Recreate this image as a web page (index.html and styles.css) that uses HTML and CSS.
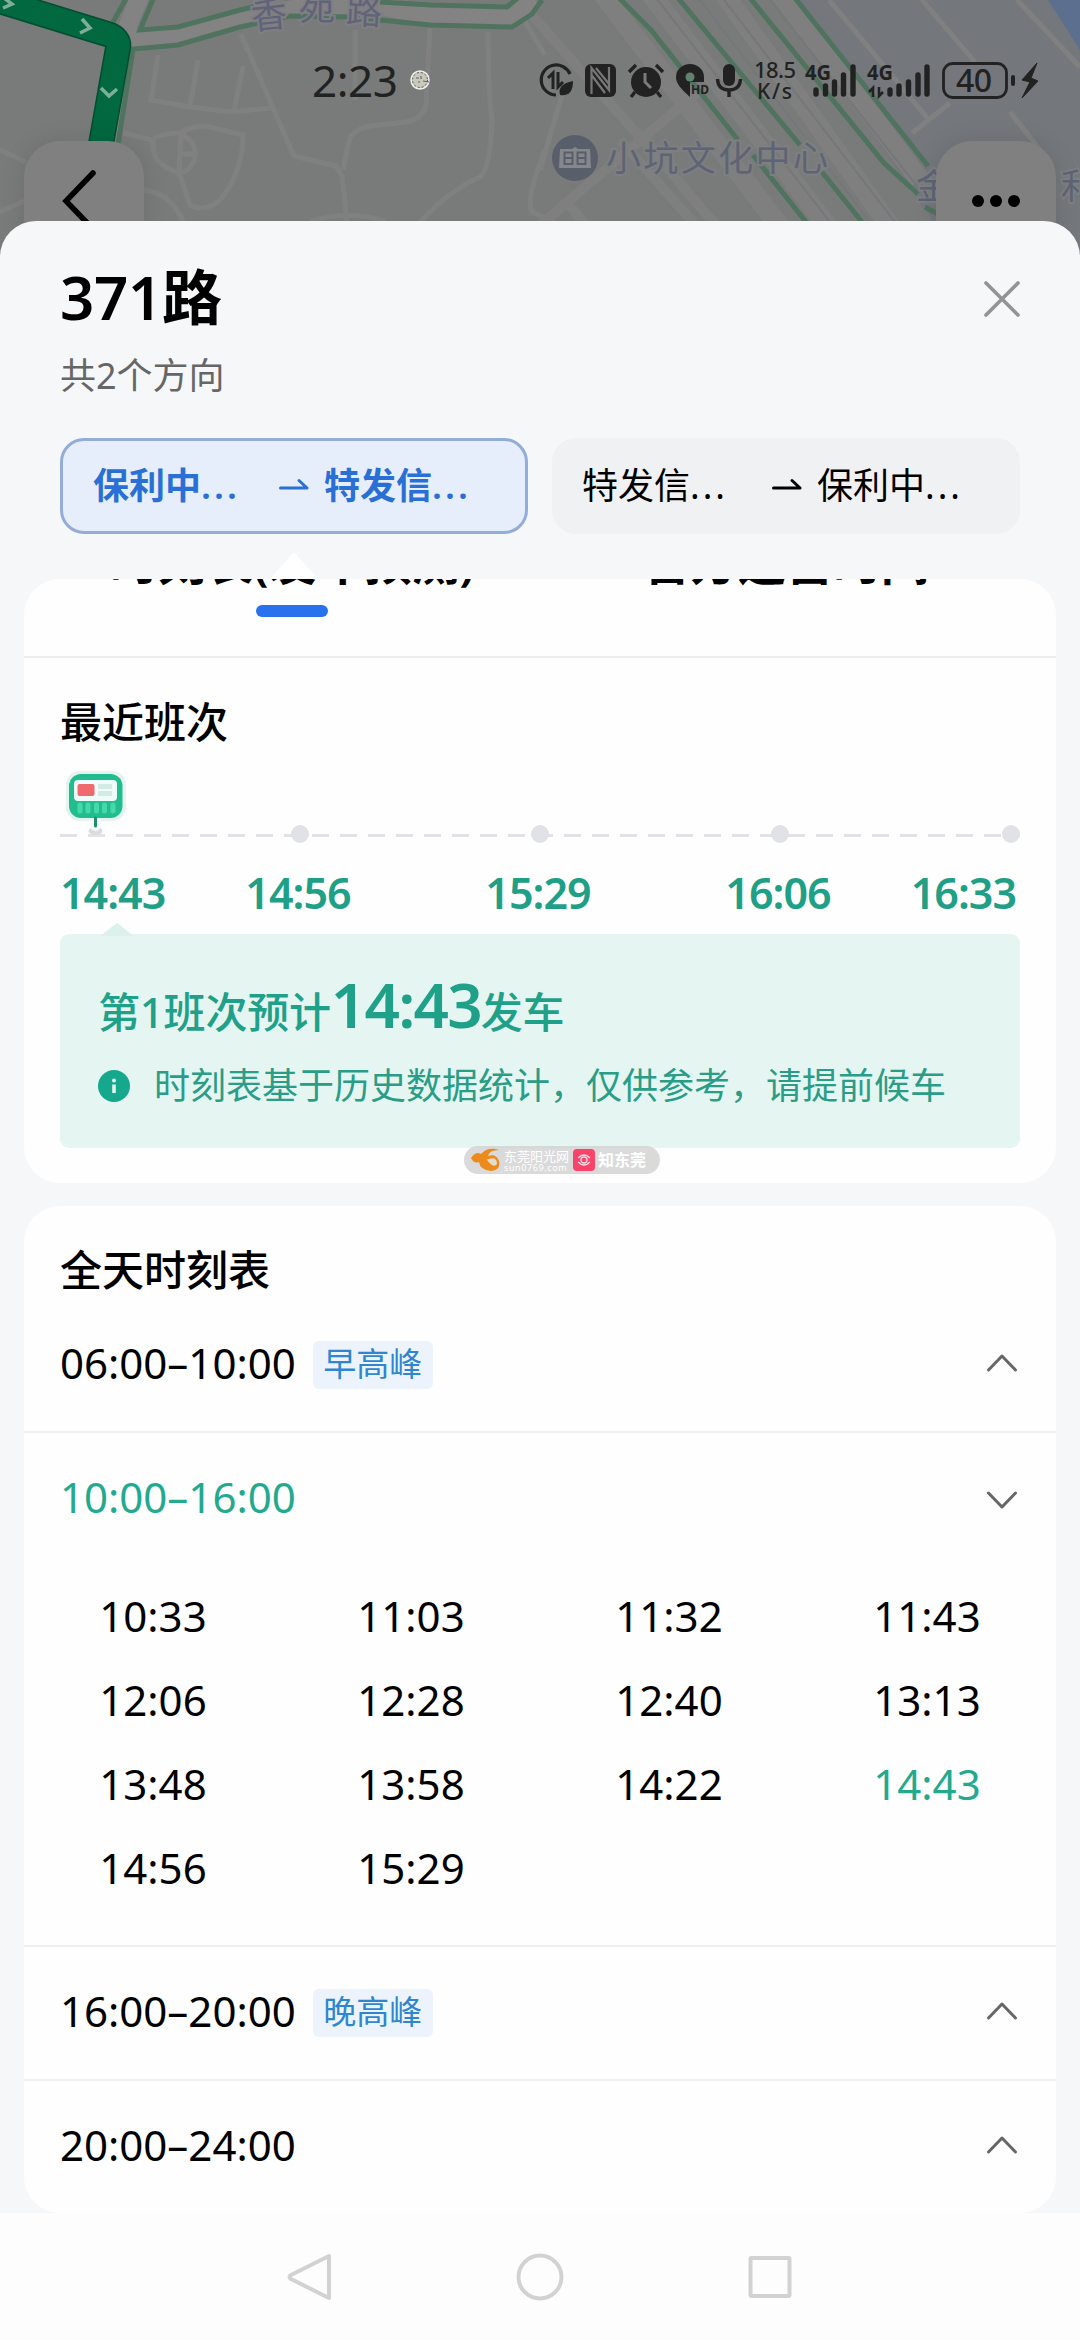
FILE: index.html
```html
<!DOCTYPE html>
<html lang="zh-CN">
<head>
<meta charset="UTF-8">
<title>371路</title>
<link rel="stylesheet" href="styles.css">
</head>
<body>
<div class="map">
	<svg class="map-canvas" width="1080" height="260" viewBox="0 0 1080 260">
		<rect width="1080" height="260" fill="#787b7a" />
		<path d="M780 0H1080V260H960z" fill="#74777c" />
		<path d="M1048 0H1080V50z" fill="#5c6f8e" />
		<!-- small streets -->
		<g fill="none" stroke="#808080" stroke-width="5">
			<path d="M241 34L273 108L294 156L336 166L342 176L347 221M158 55L151 100L190 107L232 112L272 108M198 60L190 107M243 66L234 112" />
			<path d="M123 133L152 140Q156 134 180 133Q190 126 205 126L243 135Q243 170 222 198Q205 214 190 205L179 173Q155 165 153 148V140M180 133Q200 145 194 160Q190 172 179 173L181 133M181 154H195" />
			<path d="M355 30V100M430 28L426 105Q422 120 405 122L370 126Q350 130 348 145L343 170M488 32Q488 90 492 120Q490 170 480 177Q450 190 420 222M524 20L545 55M0 150L26 162M0 212L26 200M143 190Q170 192 183 221M310 221Q350 210 385 221" />
			<path d="M829 0L929 120M950 103L912 133M922 0L975 62M1017 0L1080 67M1010 112L1040 150M562 95L540 170M545 150Q525 200 532 212L560 225" />
		</g>
		<g fill="none" stroke="#7f7f7f">
			<path d="M532 15L660 160L720 230M540 225L700 90M620 140L700 230M565 200L590 230" stroke-width="10" />
			<path d="M592 -20L790 240M640 -20L838 240M714 -20L900 240M770 -20L920 180" stroke-width="20" />
		</g>
		<g fill="none" stroke="#76777a" stroke-width="2">
			<path d="M650 -10L840 235M700 0L880 235M724 0L905 235M770 0L936 210" />
		</g>
		<!-- main roads -->
		<path d="M118 38L178 37L245 17L300 8L370 4L430 16L510 17L535 0" fill="none" stroke="#838383" stroke-width="18" />
		<path d="M140 -4L122 40L108 142" fill="none" stroke="#838383" stroke-width="18" />
		<g fill="none" stroke="#50735f" stroke-width="5">
			<path d="M127 -3L113 22M154 -3L140 30L178 27L240 10L262 5M380 2L430 5L507 7L520 -4M118 144L133 49L178 45L240 27L290 16L350 17L430 25L512 27L532 14L542 0" />
			<path d="M619 -2L651 30L738 140M678 -2L800 145M750 -2L884 163L918 194M795 -2L928 166M753 155L806 222M822 172L862 222M925 207L938 214" />
		</g>
		<!-- bus line -->
		<path d="M-10 -2L107 34Q120 38 118 48L100 150" fill="none" stroke="#034d31" stroke-width="26" />
		<path d="M-10 -2L107 34Q120 38 118 48L100 150" fill="none" stroke="#026840" stroke-width="23" />
		<path d="M82 19L90 28L80 33M4 -2L12 4L3 8M101 88L109 96L117 89" fill="none" stroke="#7fae97" stroke-width="3.5" />
		<g class="road-name">
			<text x="251" y="28" transform="rotate(-6 269 14)">香</text>
			<text x="299" y="20">苑</text>
			<text x="346" y="24" transform="rotate(3 365 12)">路</text>
		</g>
		<circle cx="575" cy="158" r="23" fill="#595e6b" />
		<path d="M560 149H572L575 147L578 149H590L591 168H559z" fill="#85878b" />
		<path d="M564.500 152.500H572.500V164H564.500zM577.500 152.500H585.500V164H577.500zM564.500 158H572.500M577.500 158H585.500" fill="none" stroke="#595e6b" stroke-width="2" />
		<text class="poi" x="606" y="171">小坑文化中心</text>
		<text class="poi" x="916" y="199">金</text>
		<text class="poi" x="1061" y="199">利</text>
	</svg>
	<div class="map-buttons">
		<div class="map-btn">
			<svg width="120" height="120" viewBox="0 0 120 120"><path d="M69 32L42 60L69 88" fill="none" stroke="#000" stroke-width="5.5" stroke-linecap="round" /></svg>
		</div>
		<div class="map-btn">
			<svg width="120" height="120" viewBox="0 0 120 120"><circle cx="42" cy="60" r="6" /><circle cx="60" cy="60" r="6" /><circle cx="78" cy="60" r="6" /></svg>
		</div>
	</div>
	<div class="status">
		<span class="clock">2:23</span>
		<svg class="coin" width="20" height="20" viewBox="0 0 20 20">
			<circle cx="10" cy="10" r="9" fill="#c9c9bb" stroke="#eee" stroke-width="1.5" /><circle cx="10" cy="10" r="7.5" fill="none" stroke="#555" stroke-dasharray="2 2" />
			<path d="M6 8H9M11 6V9M8 12H10M13 11L19 12" stroke="#666" stroke-width="1.2" />
		</svg>
		<svg class="status-icons" width="504" height="44" viewBox="538 58 504 44">
			<!-- data saver -->
			<path d="M570 74A15 15 0 1 0 556 95" fill="none" stroke="#222" stroke-width="3.2" />
			<path d="M553 89V73L548 78M558 72V87L563 82" fill="none" stroke="#222" stroke-width="3" />
			<path d="M560 95Q557 84 573 81Q573 97 560 95z" fill="#222" />
			<!-- nfc -->
			<rect x="585" y="64" width="31" height="33" rx="6" fill="#222" />
			<path d="M591.500 94V68L609 90V67M596 68L609 84M591.500 75L605 93" fill="none" stroke="#777" stroke-width="2.2" />
			<!-- alarm -->
			<circle cx="646" cy="82" r="15" fill="#222" />
			<path d="M629 72L636 65M656 65L663 72M635 92L631 97M657 92L661 97" stroke="#222" stroke-width="3.4" />
			<path d="M645 73V82L651 88" fill="none" stroke="#7b7b7b" stroke-width="3" />
			<!-- location -->
			<path d="M690 97C680 88 676 83 676 77A14 13 0 0 1 704 77V82H690z" fill="#222" />
			<circle cx="690" cy="77" r="4.5" fill="#64806f" />
			<text x="691" y="94" font-size="12" font-weight="700">HD</text>
			<!-- mic -->
			<rect x="723" y="64" width="12" height="22" rx="6" fill="#222" />
			<path d="M717.500 79Q718 90 729 90Q740 90 740.500 79M729 90V97" fill="none" stroke="#222" stroke-width="3.4" />
			<text x="754" y="78" font-size="22" font-weight="500" textLength="42">18.5</text>
			<text x="757" y="99" font-size="21" font-weight="500" textLength="35">K/s</text>
			<text x="805" y="80" font-size="22" font-weight="700" textLength="26" lengthAdjust="spacingAndGlyphs">4G</text>
			<path d="M816 90V94M825.500 86V94M834.500 82V94M843.500 75V94M853 67V94" stroke="#222" stroke-width="5.4" stroke-linecap="round" />
			<text x="867" y="80" font-size="22" font-weight="700" textLength="26" lengthAdjust="spacingAndGlyphs">4G</text>
			<path d="M873 97V88L869 92M879 87V96L883 92" fill="none" stroke="#222" stroke-width="2.600" />
			<path d="M890 90V94M899 86V94M908.500 82V94M918 75V94M927 67V94" stroke="#222" stroke-width="5.4" stroke-linecap="round" />
			<rect x="943.500" y="63.500" width="63" height="34" rx="9" fill="none" stroke="#222" stroke-width="2.8" />
			<text x="956" y="92" font-size="32" font-weight="500" textLength="36">40</text>
			<rect x="1011" y="75" width="4" height="11" rx="2" fill="#222" />
			<path d="M1037 63L1022 80L1030 82L1022 98L1038 81L1031 78z" fill="#222" stroke="#222" />
		</svg>
	</div>
</div>

<div class="sheet">
	<div class="header">
		<div>
			<div class="title">371路</div>
			<div class="sub">共2个方向</div>
		</div>
		<svg class="close" width="36" height="36" viewBox="0 0 36 36"><path d="M2 2L34 34M34 2L2 34" stroke="#929394" stroke-width="3.6" stroke-linecap="round" /></svg>
	</div>
	<div class="directions">
		<div class="direction active">
			<span class="from">保利中<span class="dots">...</span></span>
			<svg width="30" height="18" viewBox="0 0 30 18"><path d="M1.500 11H28L20 3.500" fill="none" stroke="currentColor" stroke-width="3" stroke-linecap="round" stroke-linejoin="round" /></svg>
			<span>特发信<span class="dots">...</span></span>
		</div>
		<div class="direction">
			<span class="from">特发信<span class="dots">...</span></span>
			<svg width="30" height="18" viewBox="0 0 30 18"><path d="M1.500 11H28L20 3.500" fill="none" stroke="currentColor" stroke-width="3" stroke-linecap="round" stroke-linejoin="round" /></svg>
			<span>保利中<span class="dots">...</span></span>
		</div>
	</div>

	<div class="pointer-row"><div class="pointer"></div></div>
	<div class="card recent">
		<div class="tabs">
			<div class="tab selected">时刻表(发车预测)</div>
			<div class="tab">官方运营时间</div>
		</div>
		<div class="recent-body">
			<div class="section-title">最近班次</div>
			<div class="timeline">
				<svg width="960" height="80" viewBox="60 765 960 80">
					<path d="M60 835.500H1020" stroke="#e2e3e8" stroke-width="3" stroke-dasharray="17 11" />
					<g fill="#e1e2e7"><circle cx="300" cy="834" r="9" /><circle cx="540" cy="834" r="9" /><circle cx="780" cy="834" r="9" /><circle cx="1011" cy="834" r="9" /></g>
					<ellipse cx="95.500" cy="831" rx="7" ry="4" fill="#d9dcdc" />
					<rect x="66" y="771" width="60" height="50" rx="14" fill="#e6f4ef" />
					<path d="M95.500 818V826" stroke="#f3fbf8" stroke-width="10" stroke-linecap="round" />
					<rect x="69" y="774" width="53.500" height="44" rx="12" fill="#22bd8e" />
					<path d="M95.500 818V826" stroke="#218d69" stroke-width="3" stroke-linecap="round" />
					<rect x="74" y="780" width="43" height="21" rx="4" fill="#f0fcf9" />
					<rect x="77.500" y="784" width="17" height="12" rx="2" fill="#f0696d" />
					<path d="M98 786.500H112M98 793.500H112" stroke="#d3ebe5" stroke-width="5" />
					<path d="M80 805V811M88 805V811M96.500 805V811M104.500 805V811M113 805V811" stroke="#45d9aa" stroke-width="5" stroke-linecap="round" />
				</svg>
			</div>
			<div class="next-times">
				<span>14:43</span><span>14:56</span><span>15:29</span><span>16:06</span><span>16:33</span>
			</div>
			<div class="forecast">
				<div class="forecast-title">第1班次预计<b>14:43</b>发车</div>
				<div class="forecast-note">
					<svg width="32" height="32" viewBox="0 0 32 32"><circle cx="16" cy="16" r="16" fill="#16a88d" /><circle cx="16" cy="10.500" r="2" fill="#dff6f0" /><path d="M16 14.500V23" stroke="#dff6f0" stroke-width="3.600" /></svg>
					<span>时刻表基于历史数据统计，仅供参考，请提前候车</span>
				</div>
			</div>
		</div>
		<div class="watermark">
			<svg width="31" height="24" viewBox="0 0 31 24"><path d="M1 10Q6 3 11 6Q18 -2 29 2Q19 2 18 8Q26 5 29 13Q31 22 21 23Q10 22 9 14Q4 16 1 10z" fill="#ec8a1b" /><path d="M16 12Q27 7 27 16Q24 21 17 12z" fill="#e3dccf" /></svg>
			<div class="mark-text">东莞阳光网<small>sun0769.com</small></div>
			<svg class="mark-icon" width="22" height="22" viewBox="0 0 22 22"><rect width="22" height="22" rx="4" fill="#f8436a" /><path d="M5 9Q11 3 17 9M5 13Q11 19 17 13" fill="none" stroke="#ffe0e6" stroke-width="1.300" /><circle cx="11" cy="11" r="3" fill="none" stroke="#ffe0e6" stroke-width="1.300" /></svg>
			<div class="mark-text mark-big">知东莞</div>
		</div>
	</div>

	<div class="card schedule">
		<div class="section-title">全天时刻表</div>
		<div class="period">
			<span>06:00–10:00</span><span class="tag">早高峰</span>
			<svg class="arrow" width="32" height="20" viewBox="0 0 32 20"><path d="M2.500 17L16 3L29.500 17" /></svg>
		</div>
		<div class="period open">
			<span>10:00–16:00</span>
			<svg class="arrow" width="32" height="20" viewBox="0 0 32 20"><path d="M2.500 4L16 18L29.500 4" /></svg>
		</div>
		<div class="times">
			<span>10:33</span><span>11:03</span><span>11:32</span><span>11:43</span>
			<span>12:06</span><span>12:28</span><span>12:40</span><span>13:13</span>
			<span>13:48</span><span>13:58</span><span>14:22</span><span class="current">14:43</span>
			<span>14:56</span><span>15:29</span>
		</div>
		<div class="period">
			<span>16:00–20:00</span><span class="tag">晚高峰</span>
			<svg class="arrow" width="32" height="20" viewBox="0 0 32 20"><path d="M2.500 17L16 3L29.500 17" /></svg>
		</div>
		<div class="period">
			<span>20:00–24:00</span>
			<svg class="arrow" width="32" height="20" viewBox="0 0 32 20"><path d="M2.500 17L16 3L29.500 17" /></svg>
		</div>
	</div>
</div>

<div class="navbar">
	<svg width="48" height="48" viewBox="0 0 48 48"><path d="M43 3V45L5 26Q2 24 5 22z" /></svg>
	<svg width="48" height="48" viewBox="0 0 48 48"><circle cx="24" cy="24" r="21.500" /></svg>
	<svg width="48" height="48" viewBox="0 0 48 48"><rect x="4.500" y="5" width="39" height="38" rx="1" /></svg>
</div>
</body>
</html>
```
FILE: styles.css
```css
* { box-sizing: border-box; }

body { margin: 0; width: 1080px; height: 2340px; overflow: hidden; background: #fdfdfe; color: #000;
	font-family: "Noto Sans", "Noto Sans CJK SC", sans-serif; display: flex; flex-direction: column; }

svg { display: block; flex: none; }

/* map behind the sheet */
.map { position: relative; height: 221px; flex: none; }
.map-canvas { position: absolute; top: 0; left: 0; }
.road-name { font-size: 36px; fill: #61637a; stroke: #7f7f82; stroke-width: 4px; paint-order: stroke; }
.poi { font-size: 35px; letter-spacing: 2.4px; fill: #5e6475; stroke: #7d7f80; stroke-width: 4px; paint-order: stroke; }

.map-buttons { position: absolute; top: 141px; left: 24px; right: 24px; display: flex; justify-content: space-between; }
.map-btn { width: 120px; height: 120px; border-radius: 36px; background: #808080; box-shadow: 0 0 24px rgba(0,0,0,0.1); }

.status { position: absolute; top: 58px; left: 312px; height: 44px; display: flex; align-items: center; color: #222; }
.clock { width: 98px; font-size: 44px; line-height: 44px; letter-spacing: -0.5px; }
.status-icons { margin-left: 108px; }
.status-icons text { fill: #222; }

.sheet { position: relative; height: 1992px; flex: none; padding: 0 24px; background: #f5f7f9; border-radius: 36px 36px 0 0; overflow: hidden; }

.header { display: flex; justify-content: space-between; padding: 46px 36px 0; }
.title { font-size: 60px; line-height: 60px; font-weight: 600; letter-spacing: -0.3px; }
.sub { margin-top: 31px; font-size: 36px; line-height: 36px; color: #666; }
.close { margin-top: 14px; }

.directions { display: flex; gap: 24px; padding: 44px 36px 0; }
.direction { width: 468px; height: 96px; padding-left: 30px; display: flex; align-items: center; border-radius: 24px; background: #f0f1f3; font-size: 36px; line-height: 36px; }
.direction .from { width: 190px; }
.direction svg { margin-right: 15px; }
.direction.active { border: 3px solid #94acd8; background: #e7eefb; color: #2a6fd6; font-weight: 600; }
.direction.active .from { width: 186px; }
.dots { letter-spacing: 3px; }

.pointer-row { height: 45px; padding: 18px 0 0 246px; }
.pointer { width: 48px; height: 27px; background: #fff; clip-path: polygon(50% 0, 100% 100%, 0 100%); }

.card { background: #fefefe; border-radius: 36px; }

.recent { position: relative; height: 604px; }
.tabs { height: 79px; border-bottom: 2px solid #ededef; border-radius: 36px 36px 0 0; overflow: hidden; display: flex; gap: 168px; padding-left: 86px; font-size: 48px; line-height: 48px; font-weight: 600; letter-spacing: -0.3px; }
.tab { margin-top: -41px; }
.tab.selected::after { content: ""; display: block; width: 72px; height: 12px; margin: 19px auto 0; border-radius: 6px; background: #2873ed; }
.recent-body { padding: 0 36px; }
.section-title { font-size: 42px; line-height: 42px; font-weight: 500; }
.recent .section-title { padding-top: 43px; }
.timeline { margin-top: 22px; }

.next-times { display: grid; grid-template-columns: 118px 240px 240px 240px 122px; margin-top: 27px; font-size: 43px; line-height: 42px; font-weight: 600; letter-spacing: -1px; text-align: center; color: #1f9f86; }
.next-times span:first-child { text-align: left; }
.next-times span:last-child { text-align: right; padding-right: 4px; }

.forecast { position: relative; height: 214px; margin-top: 20px; padding: 40px 37px 0 38px; border-radius: 9px; background: #e5f5f1; color: #1fa088; }
.forecast::before { content: ""; position: absolute; left: 40px; top: -11px; width: 34px; height: 13px; background: #dcf1eb; clip-path: polygon(50% 0, 100% 100%, 0 100%); }
.forecast-title { height: 60px; font-size: 42px; line-height: 60px; font-weight: 500; letter-spacing: -0.2px; white-space: nowrap; }
.forecast-title b { font-size: 62px; line-height: 60px; font-weight: 600; letter-spacing: -1.8px; }
.forecast-note { display: flex; align-items: center; gap: 24px; margin-top: 33px; font-size: 36px; line-height: 36px; white-space: nowrap; color: #2a9d87; }
.forecast-note span { margin-top: 1px; }

.watermark { position: absolute; left: 440px; top: 567px; width: 196px; height: 28px; padding-left: 6px; display: flex; align-items: center; border-radius: 14px; background: rgba(205,205,205,0.75); }
.mark-text { width: 68px; margin-left: 3px; font-size: 13px; line-height: 14px; color: #fff; white-space: nowrap; }
.mark-text small { display: block; font-size: 9px; line-height: 9px; letter-spacing: 0.6px; }
.mark-icon { margin-left: 4px; }
.mark-big { font-size: 16px; font-weight: 700; }

.schedule { margin-top: 23px; height: 1007px; }
.schedule .section-title { height: 93px; padding: 43px 36px 0; }
.period { height: 134px; padding: 0 36px 4px; display: flex; align-items: center; border-bottom: 2px solid #eeeff1; font-size: 42px; line-height: 42px; }
.period.open { height: 132px; border-bottom: 0; color: #22a98e; }
.period:last-child { height: 132px; border-bottom: 0; }
.tag { height: 48px; margin: 4px 0 0 17px; padding: 0 10.5px; border-radius: 6px; background: #edf3fc; color: #2f86cf; font-size: 33px; line-height: 46px; }
.arrow { margin-left: auto; margin-right: 2px; fill: none; stroke: #666; stroke-width: 3; stroke-linecap: round; stroke-linejoin: round; }
.open .arrow { margin-top: 4px; }

.times { display: grid; grid-template-columns: repeat(4, 1fr); grid-auto-rows: 84px; height: 382px; padding-top: 9px; border-bottom: 2px solid #eeeff1; font-size: 42px; line-height: 84px; text-align: center; }
.times .current { color: #22a98e; }

.navbar { height: 127px; display: flex; justify-content: center; gap: 182px; padding-top: 40px; }
.navbar svg { fill: none; stroke: #d2d2d2; stroke-width: 4; stroke-linejoin: round; }
```
